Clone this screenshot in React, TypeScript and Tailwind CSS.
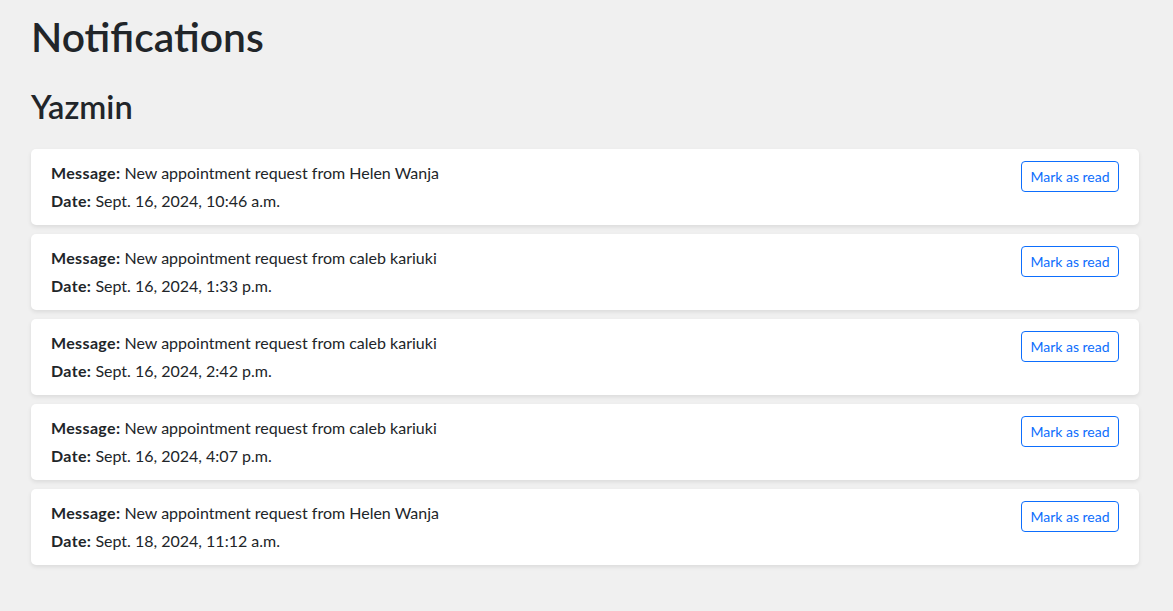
import React from "react";

type Notification = {
  id: number;
  message: string;
  date: string;
};

const notifications: Notification[] = [
  { id: 1, message: "New appointment request from Helen Wanja", date: "Sept. 16, 2024, 10:46 a.m." },
  { id: 2, message: "New appointment request from caleb kariuki", date: "Sept. 16, 2024, 1:33 p.m." },
  { id: 3, message: "New appointment request from caleb kariuki", date: "Sept. 16, 2024, 2:42 p.m." },
  { id: 4, message: "New appointment request from caleb kariuki", date: "Sept. 16, 2024, 4:07 p.m." },
  { id: 5, message: "New appointment request from Helen Wanja", date: "Sept. 18, 2024, 11:12 a.m." },
];

function NotificationCard({ item }: { item: Notification }) {
  return (
    <div className="flex items-start justify-between rounded-[5px] bg-white px-5 py-3 shadow-[0_2px_4px_rgba(0,0,0,0.09)]">
      <div className="text-[16px] leading-6">
        <p className="mb-1">
          <strong className="font-bold tracking-[0.35px]">Message:</strong> {item.message}
        </p>
        <p>
          <strong className="font-bold tracking-[0.35px]">Date:</strong> {item.date}
        </p>
      </div>
      <button className="flex h-[31px] w-[98px] items-center justify-center rounded-[4px] border border-[#0d6efd] text-[14px] text-[#0d6efd] hover:bg-[#0d6efd] hover:text-white">
        Mark as read
      </button>
    </div>
  );
}

export default function App() {
  return (
    <div
      className="min-h-screen bg-[#f0f0f0] pl-[31px] pr-[34px] pt-[13px] pb-10 text-[#212529]"
      style={{ fontFamily: "Lato, 'Liberation Sans', sans-serif" }}
    >
      <h1 className="mb-[25px] text-[40.8px] font-semibold leading-[1.2]">Notifications</h1>
      <h2 className="mb-[23px] text-[32.6px] font-semibold leading-[1.2]">Yazmin</h2>
      <div className="flex flex-col gap-[9px]">
        {notifications.map((n) => (
          <NotificationCard key={n.id} item={n} />
        ))}
      </div>
    </div>
  );
}
